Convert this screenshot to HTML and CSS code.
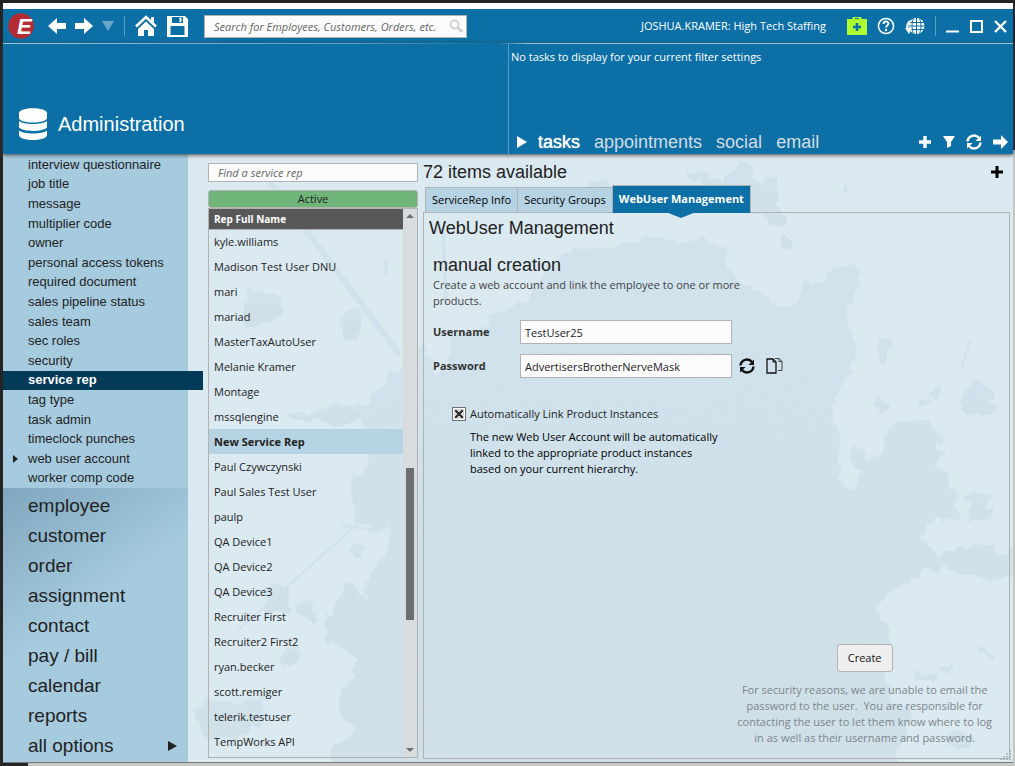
FILE: index.html
```html
<!DOCTYPE html>
<html lang="en">
<head>
    <meta charset="UTF-8">
    <meta name="viewport" content="width=device-width, initial-scale=1.0">
    <title>Administration - Service Rep</title>
    <link rel="stylesheet" href="styles.css">
</head>
<body>
<div class="window">

    <!-- Title bar -->
    <header class="titlebar">
        <svg class="logo" width="26" height="26" viewBox="0 0 26 26">
            <circle cx="13" cy="13" r="12.7" fill="#b52b33"/>
            <text x="9" y="21" class="logo-letter">E</text>
            <path d="M17 9.500h9M16 15.500h10" stroke="#b52b33" stroke-width="1"/>
        </svg>
        <nav class="history">
            <button type="button" aria-label="Back"><svg width="18" height="16" viewBox="0 0 18 16"><path d="M0 8L9 0v5h9v6H9v5z" fill="#fff"/></svg></button>
            <button type="button" aria-label="Forward"><svg width="18" height="16" viewBox="0 0 18 16"><path d="M18 8L9 0v5H0v6h9v5z" fill="#fff"/></svg></button>
            <button type="button" aria-label="History"><svg width="12" height="10" viewBox="0 0 12 10"><path d="M0 0h12L6 10z" fill="#6ba6c9"/></svg></button>
        </nav>
        <span class="divider"></span>
        <nav class="quick">
            <button type="button" aria-label="Home"><svg width="22" height="22" viewBox="0 0 22 22"><path d="M1 11.500L11 2l10 9.500" fill="none" stroke="#fff" stroke-width="2.600"/><path d="M16 2h3v6l-3-3z" fill="#fff"/><path d="M3 14l8-7.500 8 7.500v7h-6v-6H9v6H3z" fill="#fff"/></svg></button>
            <button type="button" aria-label="Save"><svg width="22" height="22" viewBox="0 0 22 22"><path fill-rule="evenodd" d="M0 1h18l3 3v18H0zM5 2v6h11V2zM3.500 11v9h14v-9z" fill="#fff"/><path d="M12.500 2.500h2V7h-2z" fill="#fff"/></svg></button>
        </nav>
        <form class="search">
            <input type="text" aria-label="Search" placeholder="Search for Employees, Customers, Orders, etc.">
            <svg width="15" height="15" viewBox="0 0 15 15"><circle cx="5.500" cy="5.500" r="4" fill="none" stroke="#d0d0d0" stroke-width="1.800"/><path d="M8.500 8.500l5 4.500" stroke="#d0d0d0" stroke-width="3"/></svg>
        </form>
        <span class="user">JOSHUA.KRAMER: High Tech Staffing</span>
        <nav class="tools">
            <button type="button" aria-label="Support"><svg width="20" height="18" viewBox="0 0 20 18"><path d="M0 2h5l1-2h8l1 2h5v16H0z" fill="#adff2f"/><path d="M8 1.500h4" stroke="#0c6fa5"/><path d="M10 6v8M6 10h8" stroke="#0c6fa5" stroke-width="2.600"/></svg></button>
            <button type="button" aria-label="Help"><svg width="18" height="18" viewBox="0 0 18 18"><circle cx="9" cy="9" r="7.600" fill="none" stroke="#fff" stroke-width="1.500"/><path d="M6.500 7c0-3.500 5-3.200 5-.4 0 1.800-2.500 1.900-2.500 4" fill="none" stroke="#fff" stroke-width="1.800"/><circle cx="9" cy="13" r="1.200" fill="#fff"/></svg></button>
            <button type="button" aria-label="Web"><svg width="20" height="18" viewBox="0 0 20 18"><circle cx="11.500" cy="9" r="8" fill="#fff"/><path d="M11.500 1v16M4 5.500h15M4 9h16M4 12.500h15M8.500 1.500c-2 5-2 10 0 15M14.500 1.500c2 5 2 10 0 15" fill="none" stroke="#0c6fa5"/><path d="M5 4c-3 2.500-3.500 5-2.500 8" fill="none" stroke="#fff" stroke-width="2"/><path d="M0 11h7l-3 6z" fill="#fff"/></svg></button>
        </nav>
        <span class="divider"></span>
        <nav class="window-buttons">
            <button type="button" aria-label="Minimize"><svg width="13" height="13" viewBox="0 0 13 13"><path d="M0 11.500h13" stroke="#fff" stroke-width="2"/></svg></button>
            <button type="button" aria-label="Maximize"><svg width="13" height="13" viewBox="0 0 13 13"><path d="M1 1h11v11H1z" fill="none" stroke="#fff" stroke-width="2"/></svg></button>
            <button type="button" aria-label="Close"><svg width="13" height="13" viewBox="0 0 13 13"><path d="M1 1l11 11M12 1L1 12" stroke="#fff" stroke-width="2.400"/></svg></button>
        </nav>
    </header>

    <!-- Banner with the task panel -->
    <section class="banner">
        <div class="banner-title">
            <svg width="28" height="32" viewBox="0 0 28 32"><path d="M0 5c0-6.500 28-6.500 28 0v5c0 6-28 6-28 0z" fill="#fff"/><path d="M0 13c4 4 24 4 28 0v6.500c-4 4.500-24 4.500-28 0z" fill="#fff"/><path d="M0 22.500c4 4 24 4 28 0v5c-2 6-26 6-28 0z" fill="#fff"/></svg>
            <h1>Administration</h1>
        </div>
        <div class="tasks">
            <p>No tasks to display for your current filter settings</p>
            <div class="task-bar">
                <svg width="12" height="12" viewBox="0 0 12 12"><path d="M1 0l10 6-10 6z" fill="#fff"/></svg>
                <a href="#" class="current">tasks</a>
                <a href="#">appointments</a>
                <a href="#">social</a>
                <a href="#">email</a>
                <span class="task-buttons">
                    <button type="button" aria-label="Add task"><svg width="14" height="14" viewBox="0 0 14 14"><path d="M7 1v12M1 7h12" stroke="#fff" stroke-width="3.400"/></svg></button>
                    <button type="button" aria-label="Filter"><svg width="12" height="12" viewBox="0 0 12 12"><path d="M0 0h12L8 6v4l-4 2V6z" fill="#fff"/></svg></button>
                    <button type="button" aria-label="Refresh"><svg width="16" height="16" viewBox="0 0 16 16"><path d="M1.500 7.500a6.500 6.500 0 0 1 11.500-3.500M14.500 8.500a6.500 6.500 0 0 1-11.500 3.500" fill="none" stroke="#fff" stroke-width="2.400"/><path d="M15 1.500V7H9.500zM1 14.500V9h5.500z" fill="#fff"/></svg></button>
                    <button type="button" aria-label="Next"><svg width="15" height="14" viewBox="0 0 15 14"><path d="M15 7L8 0v4.500H0v5h8V14z" fill="#fff"/></svg></button>
                </span>
            </div>
        </div>
    </section>

    <div class="content">
        <!-- Paint splatter behind everything -->
        <svg class="splatter" viewBox="188 154 825 609" preserveAspectRatio="xMinYMin slice" aria-hidden="true">
            <defs>
                <filter id="rough" x="-5%" y="-5%" width="110%" height="110%" color-interpolation-filters="sRGB">
                    <feTurbulence type="fractalNoise" baseFrequency="0.07" numOctaves="2" seed="4"/>
                    <feDisplacementMap in="SourceGraphic" scale="20" xChannelSelector="R" yChannelSelector="G"/>
                </filter>
                <linearGradient id="paint" x1="0" y1="0" x2="0" y2="1">
                    <stop offset="0" stop-color="#d0e2ec"/>
                    <stop offset="1" stop-color="#cfe0e8"/>
                </linearGradient>
            </defs>
            <g filter="url(#rough)" fill="url(#paint)">
                <path d="M652 232Q670 246 699 240 722 243 728 262T765 298Q785 312 798 300 805 284 824 280 838 256 850 264 866 268 858 290 840 310 852 330 862 350 845 380 830 400 834 425 836 460 844 484L860 484Q862 460 881 449 890 420 912 421 935 420 943 437 936 470 952 490 966 510 955 523 930 518 922 531 925 552 943 555 980 540 1020 555V576Q980 585 959 574 920 560 902 586 880 590 881 614 895 640 886 661 888 700 912 716 900 750 886 775H326Q330 745 356 731 330 715 340 690 362 665 350 650 320 650 325 630 332 590 350 585 366 590 368 610 368 570 380 560 398 545 392 527 362 535 352 510 345 490 362 465 380 440 362 420 362 395 385 388 390 362 400 372 410 340 423 346 432 375 449 370 445 340 458 335 480 345 490 320 505 300 530 300 533 280 550 268T585 248Q620 250 652 232z"/>
                <path d="M685 167Q705 170 722 180 738 160 745 165 755 185 775 180 784 195 775 205 795 220 780 225 740 205 720 200 700 180 685 167z"/>
                <circle cx="768" cy="192" r="11"/>
                <circle cx="785" cy="242" r="7"/>
                <circle cx="600" cy="190" r="12"/>
                <ellipse cx="262" cy="308" rx="19" ry="17"/>
                <ellipse cx="353" cy="325" rx="12" ry="15"/>
                <ellipse cx="978" cy="401" rx="16" ry="17"/>
                <circle cx="860" cy="458" r="10"/>
                <ellipse cx="978" cy="505" rx="12" ry="18"/>
                <circle cx="277" cy="600" r="15"/>
                <circle cx="307" cy="610" r="9"/>
                <circle cx="290" cy="655" r="10"/>
                <circle cx="357" cy="551" r="7"/>
                <path d="M190 714Q195 700 215 700 240 708 268 696 272 710 260 725 230 745 205 735z"/>
                <path d="M340 408Q370 402 405 412L385 422Q330 428 286 416 300 410 340 408z"/>
                <ellipse cx="885" cy="350" rx="4" ry="12"/>
                <ellipse cx="925" cy="678" rx="10" ry="4"/>
                <ellipse cx="945" cy="669" rx="6" ry="3"/>
                <ellipse cx="960" cy="740" rx="12" ry="9"/>
                <ellipse cx="985" cy="652" rx="7" ry="3"/>
                <circle cx="937" cy="392" r="6"/>
                <circle cx="925" cy="402" r="5"/>
                <circle cx="880" cy="407" r="6"/>
                <circle cx="847" cy="192" r="4"/>
            </g>
            <g stroke="#d0e2ec" fill="none">
                <path d="M268 180L400 355" stroke-width="6"/>
                <path d="M368 515L238 630" stroke-width="2"/>
                <path d="M443 230l3 75M386 260v14" stroke-width="4"/>
                <path d="M970 340l-8 28M340 525l40 6" stroke-width="2"/>
            </g>
        </svg>

        <!-- Sidebar -->
        <nav class="sidebar">
            <ul class="sub-menu">
                <li><a href="#">interview questionnaire</a></li>
                <li><a href="#">job title</a></li>
                <li><a href="#">message</a></li>
                <li><a href="#">multiplier code</a></li>
                <li><a href="#">owner</a></li>
                <li><a href="#">personal access tokens</a></li>
                <li><a href="#">required document</a></li>
                <li><a href="#">sales pipeline status</a></li>
                <li><a href="#">sales team</a></li>
                <li><a href="#">sec roles</a></li>
                <li><a href="#">security</a></li>
                <li class="selected"><a href="#">service rep</a></li>
                <li><a href="#">tag type</a></li>
                <li><a href="#">task admin</a></li>
                <li><a href="#">timeclock punches</a></li>
                <li class="has-children"><a href="#">web user account</a></li>
                <li><a href="#">worker comp code</a></li>
            </ul>
            <ul class="main-menu">
                <li><a href="#">employee</a></li>
                <li><a href="#">customer</a></li>
                <li><a href="#">order</a></li>
                <li><a href="#">assignment</a></li>
                <li><a href="#">contact</a></li>
                <li><a href="#">pay / bill</a></li>
                <li><a href="#">calendar</a></li>
                <li><a href="#">reports</a></li>
                <li class="more"><a href="#">all options</a></li>
            </ul>
        </nav>

        <!-- Service rep list -->
        <section class="reps">
            <input type="text" class="find" aria-label="Find a service rep" placeholder="Find a service rep">
            <button type="button" class="active-filter">Active</button>
            <div class="rep-list">
                <table>
                    <thead>
                        <tr><th>Rep Full Name</th></tr>
                    </thead>
                    <tbody>
                        <tr><td>kyle.williams</td></tr>
                        <tr><td>Madison Test User DNU</td></tr>
                        <tr><td>mari</td></tr>
                        <tr><td>mariad</td></tr>
                        <tr><td>MasterTaxAutoUser</td></tr>
                        <tr><td>Melanie Kramer</td></tr>
                        <tr><td>Montage</td></tr>
                        <tr><td>mssqlengine</td></tr>
                        <tr class="selected"><td>New Service Rep</td></tr>
                        <tr><td>Paul Czywczynski</td></tr>
                        <tr><td>Paul Sales Test User</td></tr>
                        <tr><td>paulp</td></tr>
                        <tr><td>QA Device1</td></tr>
                        <tr><td>QA Device2</td></tr>
                        <tr><td>QA Device3</td></tr>
                        <tr><td>Recruiter First</td></tr>
                        <tr><td>Recruiter2 First2</td></tr>
                        <tr><td>ryan.becker</td></tr>
                        <tr><td>scott.remiger</td></tr>
                        <tr><td>telerik.testuser</td></tr>
                        <tr><td>TempWorks API</td></tr>
                    </tbody>
                </table>
                <div class="scrollbar">
                    <span class="arrow-up"></span>
                    <div class="track"><span class="thumb"></span></div>
                    <span class="arrow-down"></span>
                </div>
            </div>
        </section>

        <!-- Detail -->
        <main class="detail">
            <div class="detail-head">
                <h2>72 items available</h2>
                <button type="button" aria-label="Add service rep"><svg width="12" height="12" viewBox="0 0 12 12"><path d="M6 0v12M0 6h12" stroke="#000" stroke-width="3"/></svg></button>
            </div>
            <div class="tabs">
                <button type="button">ServiceRep Info</button>
                <button type="button">Security Groups</button>
                <button type="button" class="current">WebUser Management</button>
            </div>
            <form class="panel">
                <h2>WebUser Management</h2>
                <h3>manual creation</h3>
                <p class="intro">Create a web account and link the employee to one or more<br>products.</p>
                <div class="field">
                    <label for="username">Username</label>
                    <input type="text" id="username" value="TestUser25">
                </div>
                <div class="field">
                    <label for="password">Password</label>
                    <input type="text" id="password" value="AdvertisersBrotherNerveMask">
                    <button type="button" aria-label="New password"><svg width="16" height="16" viewBox="0 0 16 16"><path d="M1.500 7.500a6.500 6.500 0 0 1 11.500-3.500M14.500 8.500a6.500 6.500 0 0 1-11.500 3.500" fill="none" stroke="#111" stroke-width="2.400"/><path d="M15 1.500V7H9.500zM1 14.500V9h5.500z" fill="#111"/></svg></button>
                    <button type="button" aria-label="Copy password"><svg width="17" height="16" viewBox="0 0 17 16"><path d="M1 1h6l3 3v11H1z" fill="none" stroke="#111" stroke-width="1.300"/><path d="M7 1v3h3" fill="none" stroke="#111"/><path d="M9 .5h4l3 3v9h-4M13 .5v3h3" fill="none" stroke="#444"/></svg></button>
                </div>
                <div class="auto-link">
                    <input type="checkbox" id="autoLink" checked>
                    <label for="autoLink">Automatically Link Product Instances</label>
                    <p>The new Web User Account will be automatically<br>linked to the appropriate product instances<br>based on your current hierarchy.</p>
                </div>
                <div class="create">
                    <button type="submit">Create</button>
                    <p>For security reasons, we are unable to email the<br>password to the user.&nbsp; You are responsible for<br>contacting the user to let them know where to log<br>in as well as their username and password.</p>
                </div>
            </form>
        </main>
        <svg class="grip" width="12" height="12" viewBox="0 0 12 12"><path d="M10 1v10M7 4v7M4 7v4M1 10v1" stroke="#8fa3ad" stroke-width="1.500" stroke-dasharray="1.500 1.500"/></svg>
    </div>
</div>
</body>
</html>
```
FILE: styles.css
```css
* {
    box-sizing: border-box;
}
body {
    margin: 0;
    height: 100vh;
    padding: 3px 2px 3px 3px;
    background: linear-gradient(#242424 150px, #c6c6c6 150px) right / 2px 100% no-repeat,
        linear-gradient(to right, #242424 28px, #c8c8c4 28px) bottom / 100% 3px no-repeat,
        #242424;
    font-family: "Open Sans", sans-serif;
    font-size: 11px;
    line-height: 16px;
    color: #222;
}
h1, h2, h3, .sidebar, .task-bar {
    font-family: "Liberation Sans", sans-serif;
    font-weight: normal;
}
h1, h2, h3, p, ul {
    margin: 0;
    padding: 0;
}
ul {
    list-style: none;
}
a {
    color: inherit;
    text-decoration: none;
}
button {
    font: inherit;
    color: inherit;
    padding: 0;
    border: none;
    background: none;
    cursor: pointer;
}
input {
    font: inherit;
    color: #222;
    background-color: #fbfbfb;
    border: 1px solid #b2b2b2;
    border-radius: 0;
}
input::placeholder {
    color: #666;
    font-style: italic;
    opacity: 1;
}
svg {
    display: block;
}
.window {
    display: flex;
    flex-direction: column;
    height: 100%;
    border-top: 6px solid #fff;
}

/* title bar */
.titlebar {
    display: flex;
    align-items: center;
    flex: none;
    height: 34px;
    padding: 0 6px 0 5px;
    background-color: #0c6fa5;
    color: #fff;
}
.logo {
    margin-right: 14px;
}
.logo-letter {
    font: italic bold 22px "Liberation Sans", sans-serif;
    fill: #fff;
}
.history, .quick, .tools, .window-buttons {
    display: flex;
    align-items: center;
    gap: 10px;
}
.history {
    gap: 9px;
}
.divider {
    width: 1px;
    height: 20px;
    margin: 0 10px;
    background-color: #5b9dc3;
}
.search {
    position: relative;
    margin-left: 15px;
}
.search input {
    width: 263px;
    height: 23px;
    padding: 0 26px 0 9px;
}
.search svg {
    position: absolute;
    top: 4px;
    right: 3px;
}
.user {
    margin: 0 21px 0 auto;
}
.window-buttons {
    gap: 11px;
}

/* banner */
.banner {
    display: flex;
    flex: none;
    height: 111px;
    position: relative;
    z-index: 2;
    border-top: 1px solid;
    border-image: linear-gradient(to right, #9cc4dc, #5b9dc3 35%, #0c6fa5 49%, #9cc4dc 52%) 1;
    background-color: #0c6fa5;
    box-shadow: 0 1px 4px #444;
    color: #fff;
}
.banner-title {
    display: flex;
    align-items: flex-end;
    gap: 11px;
    width: 50%;
    padding: 0 0 14px 16px;
}
h1 {
    font-size: 20px;
    line-height: 32px;
}
.tasks {
    display: flex;
    flex-direction: column;
    justify-content: space-between;
    width: 50%;
    padding: 5px 5px 1px 2px;
    border-left: 1px solid #5b9dc3;
}
.task-bar {
    display: flex;
    align-items: center;
    gap: 14px;
    padding-left: 5px;
    font-size: 18px;
    line-height: 22px;
    color: #d3dde4;
}
.task-bar > svg {
    margin-right: -4px;
}
.task-bar .current {
    color: #fff;
    text-shadow: 0 0 1px #fff;
}
.task-buttons {
    display: flex;
    align-items: center;
    gap: 11px;
    margin-left: auto;
}

/* content */
.content {
    display: flex;
    flex: 1;
    min-height: 0;
    position: relative;
    z-index: 0;
    padding: 0 3px 0 0;
    background-color: #dbe9f0;
    border-bottom: 1px solid #777;
}
.splatter {
    position: absolute;
    inset: 0 0 0 185px;
    width: calc(100% - 185px);
    height: 100%;
    z-index: -1;
}
.grip {
    position: absolute;
    right: 1px;
    bottom: 1px;
}

/* sidebar */
.sidebar {
    display: flex;
    flex-direction: column;
    width: 185px;
    flex: none;
    background-color: #a6cbdf;
}
.sub-menu {
    display: flex;
    flex-direction: column;
    flex: 1;
    padding-top: 1px;
    font-size: 13px;
}
.sub-menu li {
    display: flex;
    align-items: center;
    flex: 1;
    padding-left: 25px;
    position: relative;
}
.sub-menu .selected {
    width: 200px;
    background-color: #023a57;
    color: #fff;
    font-weight: bold;
}
.has-children::before {
    content: "";
    position: absolute;
    left: 10px;
    border: 4px solid transparent;
    border-left: 5px solid #222;
    border-right: none;
}
.main-menu {
    padding: 3px 0 1px;
    font-size: 19px;
    line-height: 30px;
    background: linear-gradient(145deg, #7fa7bd, #a6cbdf 45%);
}
.main-menu li {
    padding-left: 25px;
}
.main-menu .more {
    display: flex;
    align-items: center;
    justify-content: space-between;
    padding-right: 11px;
}
.more::after {
    content: "";
    border: 5px solid transparent;
    border-left: 9px solid #222;
    border-right: none;
}

/* service rep list */
.reps {
    display: flex;
    flex-direction: column;
    width: 210px;
    flex: none;
    margin: 9px 5px 4px 20px;
}
.find {
    height: 19px;
    padding: 0 9px;
}
.active-filter {
    height: 18px;
    margin-top: 8px;
    border: 1px solid #b2b2b2;
    border-radius: 3px;
    background-color: #6fb57a;
}
.rep-list {
    display: flex;
    flex: 1;
    min-height: 0;
    overflow: hidden;
    border: 1px solid #b2b2b2;
}
.rep-list table {
    flex: 1;
    align-self: flex-start;
    border-collapse: collapse;
}
.rep-list th {
    height: 20px;
    padding: 0 5px;
    text-align: left;
    font-size: 10px;
    color: #fff;
    background-color: #585858;
    border-bottom: 1px solid #b2b2b2;
}
.rep-list td {
    height: 25px;
    padding: 0 5px;
}
.rep-list .selected {
    background-color: #b6d3e4;
    font-weight: bold;
}
.scrollbar {
    display: flex;
    flex-direction: column;
    align-items: center;
    width: 14px;
    padding: 5px 0;
    background-color: #d9dcdf;
}
.arrow-up, .arrow-down {
    border: 4px solid transparent;
}
.arrow-up {
    border-top: none;
    border-bottom-color: #6d6e70;
}
.arrow-down {
    border-bottom: none;
    border-top-color: #6d6e70;
}
.track {
    display: flex;
    flex-direction: column;
    flex: 1;
}
.track::before {
    content: "";
    flex: 250;
}
.track::after {
    content: "";
    flex: 128;
}
.thumb {
    width: 8px;
    flex: 151;
    background-color: #6d6e70;
}

/* detail */
.detail {
    display: flex;
    flex-direction: column;
    flex: 1;
    margin-bottom: 3px;
}
h2, h3 {
    font-size: 18px;
    line-height: 22px;
}
.detail-head {
    display: flex;
    align-items: center;
    justify-content: space-between;
    padding: 7px 7px 0 0;
}
.tabs {
    display: flex;
    align-items: flex-end;
    position: relative;
    z-index: 1;
    margin: 2px 0 -1px 2px;
    color: #000;
}
.tabs button {
    height: 26px;
    padding: 0 6px;
    border: 1px solid #b2b2b2;
    background-color: #b6d3e4;
}
.tabs button + button {
    margin-left: -1px;
}
.tabs .current {
    position: relative;
    height: 28px;
    background-color: #0c6fa5;
    border-bottom-color: #0c6fa5;
    color: #fff;
    font-weight: bold;
}
.tabs .current::after {
    content: "";
    position: absolute;
    top: 100%;
    left: calc(50% - 15px);
    border: 15px solid transparent;
    border-top: 6px solid #0c6fa5;
    border-bottom: none;
}
.panel {
    display: flex;
    flex-direction: column;
    flex: 1;
    padding: 4px 12px 12px 9px;
    border: 1px solid #b2b2b2;
}
.panel h2 {
    margin-left: -4px;
}
.panel h3 {
    margin: 15px 0 1px;
}
.intro {
    margin-bottom: 1px;
    color: #444;
}
.field {
    display: flex;
    align-items: center;
    margin-top: 10px;
}
.field label {
    width: 87px;
    font-weight: bold;
    color: #333;
}
.field input {
    width: 212px;
    height: 24px;
    padding: 0 4px;
}
.field button {
    margin-left: 7px;
}
.field button + button {
    margin-left: 11px;
}
.auto-link {
    display: grid;
    grid-template-columns: 14px auto;
    align-items: center;
    justify-content: start;
    gap: 7px 4px;
    margin: 28px 0 0 19px;
}
.auto-link p {
    grid-column: 2;
    color: #000;
}
.auto-link input {
    appearance: none;
    width: 14px;
    height: 14px;
    margin: 0;
    border: 1px solid #707070;
    background-color: #e4e4e4;
    box-shadow: inset 0 0 0 1px #fff;
}
.auto-link input:checked {
    background: linear-gradient(45deg, transparent 42%, #333 42%, #333 58%, transparent 58%) center / 8px 8px no-repeat,
        linear-gradient(-45deg, transparent 42%, #333 42%, #333 58%, transparent 58%) center / 8px 8px no-repeat,
        #d4d4d4;
}
.create {
    display: flex;
    flex-direction: column;
    align-items: center;
    align-self: flex-end;
    gap: 10px;
    margin-top: auto;
    padding-right: 5px;
    text-align: center;
    color: #7c868b;
}
.create button {
    height: 28px;
    padding: 0 10px;
    border: 1px solid #b2b2b2;
    border-radius: 3px;
    background-color: #efefef;
    color: #111;
}
```
